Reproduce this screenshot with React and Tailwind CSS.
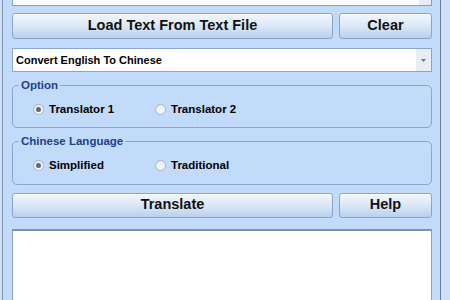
import React from 'react';

const font = { fontFamily: '"Liberation Sans", Arial, sans-serif' };

function WinButton({ children, className = '' }) {
  return (
    <button
      className={`h-[26px] rounded-[3px] border border-[#8aa5c6] bg-gradient-to-b from-[#f3f7fd] via-[#dbe7f6] to-[#b9d0ee] text-[14.5px] font-bold text-[#111] shadow-[inset_0_1px_0_#ffffff] ${className}`}
    >
      {children}
    </button>
  );
}

function Radio({ label, checked }) {
  return (
    <label className="flex items-center gap-[5px] text-[11.5px] font-bold text-black">
      <span className="flex h-[11px] w-[11px] items-center justify-center rounded-full border border-[#a7b4c4] bg-gradient-to-br from-[#e4e8ee] to-[#fbfcfd]">
        {checked && <span className="h-[5px] w-[5px] rounded-full bg-[#5c6a7a]" />}
      </span>
      {label}
    </label>
  );
}

function Group({ title, children }) {
  return (
    <fieldset className="rounded-[5px] border border-[#8ba6c6] px-[19px] pb-[9px] pt-[9px]">
      <legend className="ml-[-13px] px-[2px] text-[11.5px] font-bold leading-[14px] text-[#1c3f8c]">{title}</legend>
      <div className="flex items-center">{children}</div>
    </fieldset>
  );
}

export default function App() {
  return (
    <div style={font} className="flex h-[300px] w-[450px] overflow-hidden bg-[#c8ddf7]">
      <div className="w-[2px] bg-[#cfe1f8]" />
      <div className="w-px bg-[#7f93ad]" />
      <div className="flex flex-1 flex-col bg-[#c3dbfa] pl-[9px] pr-[8px]">
        <div className="flex h-[6px] border-x border-b border-[#8aa0bc] bg-white">
          <div className="flex-1" />
          <div className="w-[12px] bg-[#e7ecf2]" />
        </div>
        <div className="mt-[7px] flex gap-[6px]">
          <WinButton className="flex-1">Load Text From Text File</WinButton>
          <WinButton className="w-[93px]">Clear</WinButton>
        </div>
        <div className="mt-[9px] flex h-[24px] items-stretch border border-[#8aa5c6] bg-white">
          <span className="flex flex-1 items-center pl-[3px] text-[11px] font-bold text-black">Convert English To Chinese</span>
          <span className="flex w-[15px] items-center justify-center bg-[#e9eef4]">
            <svg width="5" height="3" viewBox="0 0 5 3">
              <path d="M0 0h5L2.5 3z" fill="#6b7686" />
            </svg>
          </span>
        </div>
        <div className="mt-[6px] flex flex-col gap-[6px]">
          <Group title="Option">
            <div className="w-[123px] pl-[1px]"><Radio label="Translator 1" checked /></div>
            <Radio label="Translator 2" />
          </Group>
          <Group title="Chinese Language">
            <div className="w-[123px] pl-[1px]"><Radio label="Simplified" checked /></div>
            <Radio label="Traditional" />
          </Group>
        </div>
        <div className="mt-[8px] flex gap-[6px]">
          <WinButton className="!h-[25px] flex-1">Translate</WinButton>
          <WinButton className="!h-[25px] w-[93px]">Help</WinButton>
        </div>
        <div className="mt-[11px] flex-1 border-x border-t-2 border-[#7d91ab] border-x-[#8aa0bc] bg-white" />
      </div>
      <div className="w-px bg-[#6f8099]" />
      <div className="w-[9px] bg-[#cfe1f8]" />
    </div>
  );
}
